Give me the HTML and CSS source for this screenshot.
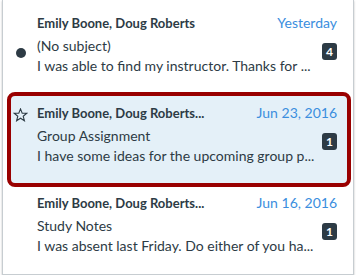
FILE: index.html
```html
<!DOCTYPE HTML>
<html>
<head>
<meta charset="utf-8">
<title>Inbox</title>
<link rel="stylesheet" href="styles.css">
</head>
<body>
<div class="panel">
	<div class="msg">
		<div class="mark"><span class="dot"></span></div>
		<div class="main">
			<div class="head">
				<span class="who">Emily Boone, Doug Roberts</span>
				<span class="when">Yesterday</span>
			</div>
			<div class="body">
				<div class="lines">
					<p class="subj">(No subject)</p>
					<p class="text">I was able to find my instructor. Thanks for ...</p>
				</div>
				<span class="count">4</span>
			</div>
		</div>
	</div>
	<div class="msg selected">
		<div class="mark">
			<svg class="star" width="15" height="14" viewBox="0 0 15 14">
				<path d="M7.5 0.9 L9.2 5.1 L13.8 5.3 L10.2 8.2 L11.4 12.7 L7.5 10.2 L3.6 12.7 L4.8 8.2 L1.2 5.3 L5.8 5.1 Z" fill="none" stroke="#2d3b45" stroke-width="1.1" stroke-linejoin="miter"/>
			</svg>
		</div>
		<div class="main">
			<div class="head">
				<span class="who">Emily Boone, Doug Roberts...</span>
				<span class="when">Jun 23, 2016</span>
			</div>
			<div class="body">
				<div class="lines">
					<p class="subj">Group Assignment</p>
					<p class="text">I have some ideas for the upcoming group p...</p>
				</div>
				<span class="count">1</span>
			</div>
		</div>
	</div>
	<div class="msg">
		<div class="mark"></div>
		<div class="main">
			<div class="head">
				<span class="who">Emily Boone, Doug Roberts...</span>
				<span class="when">Jun 16, 2016</span>
			</div>
			<div class="body">
				<div class="lines">
					<p class="subj">Study Notes</p>
					<p class="text">I was absent last Friday. Do either of you ha...</p>
				</div>
				<span class="count">1</span>
			</div>
		</div>
	</div>
</div>
</body>
</html>
```
FILE: styles.css
```css
body{
	margin: 0;
	background: #fff;
	font-family: Lato, "Open Sans", sans-serif;
	color: #2d3b45;
}
.panel{
	width: 350px;
	margin-left: 2px;
	padding-bottom: 4px;
	background: #fff;
	border: 1px solid #c7cdd1;
	border-top: none;
	box-shadow: 0 1px 2px rgba(0,0,0,0.25);
}
.msg{
	height: 90px;
	display: flex;
	position: relative;
	z-index: 0;
	box-sizing: border-box;
	padding: 14px 16px 0 0;
}
.selected::before{
	content: "";
	position: absolute;
	top: 2px;
	left: 4px;
	right: 2px;
	bottom: -7px;
	z-index: -1;
	background: #e4f0f8;
	border: 4px solid #990000;
	border-radius: 8px;
}
.mark{
	width: 34px;
	flex: none;
	position: relative;
}
.dot{
	position: absolute;
	left: 13px;
	top: 34px;
	width: 10px;
	height: 10px;
	border-radius: 50%;
	background: #2d3b45;
}
.star{
	position: absolute;
	left: 10px;
	top: 4px;
}
.main{
	flex: 1;
	min-width: 0;
}
.head{
	display: flex;
	justify-content: space-between;
	align-items: baseline;
	line-height: 18px;
}
.who{
	font-size: 13px;
	font-weight: bold;
}
.when{
	font-size: 14px;
	color: #3b8ede;
}
.body{
	display: flex;
	justify-content: space-between;
	margin-top: 4px;
}
.lines p{
	margin: 0;
	font-size: 14px;
	line-height: 20px;
	white-space: nowrap;
}
.count{
	margin-top: 7px;
	width: 15px;
	height: 17px;
	line-height: 17px;
	text-align: center;
	border-radius: 3px;
	background: #2d3b45;
	color: #fff;
	font-size: 12px;
	font-weight: bold;
}
```
